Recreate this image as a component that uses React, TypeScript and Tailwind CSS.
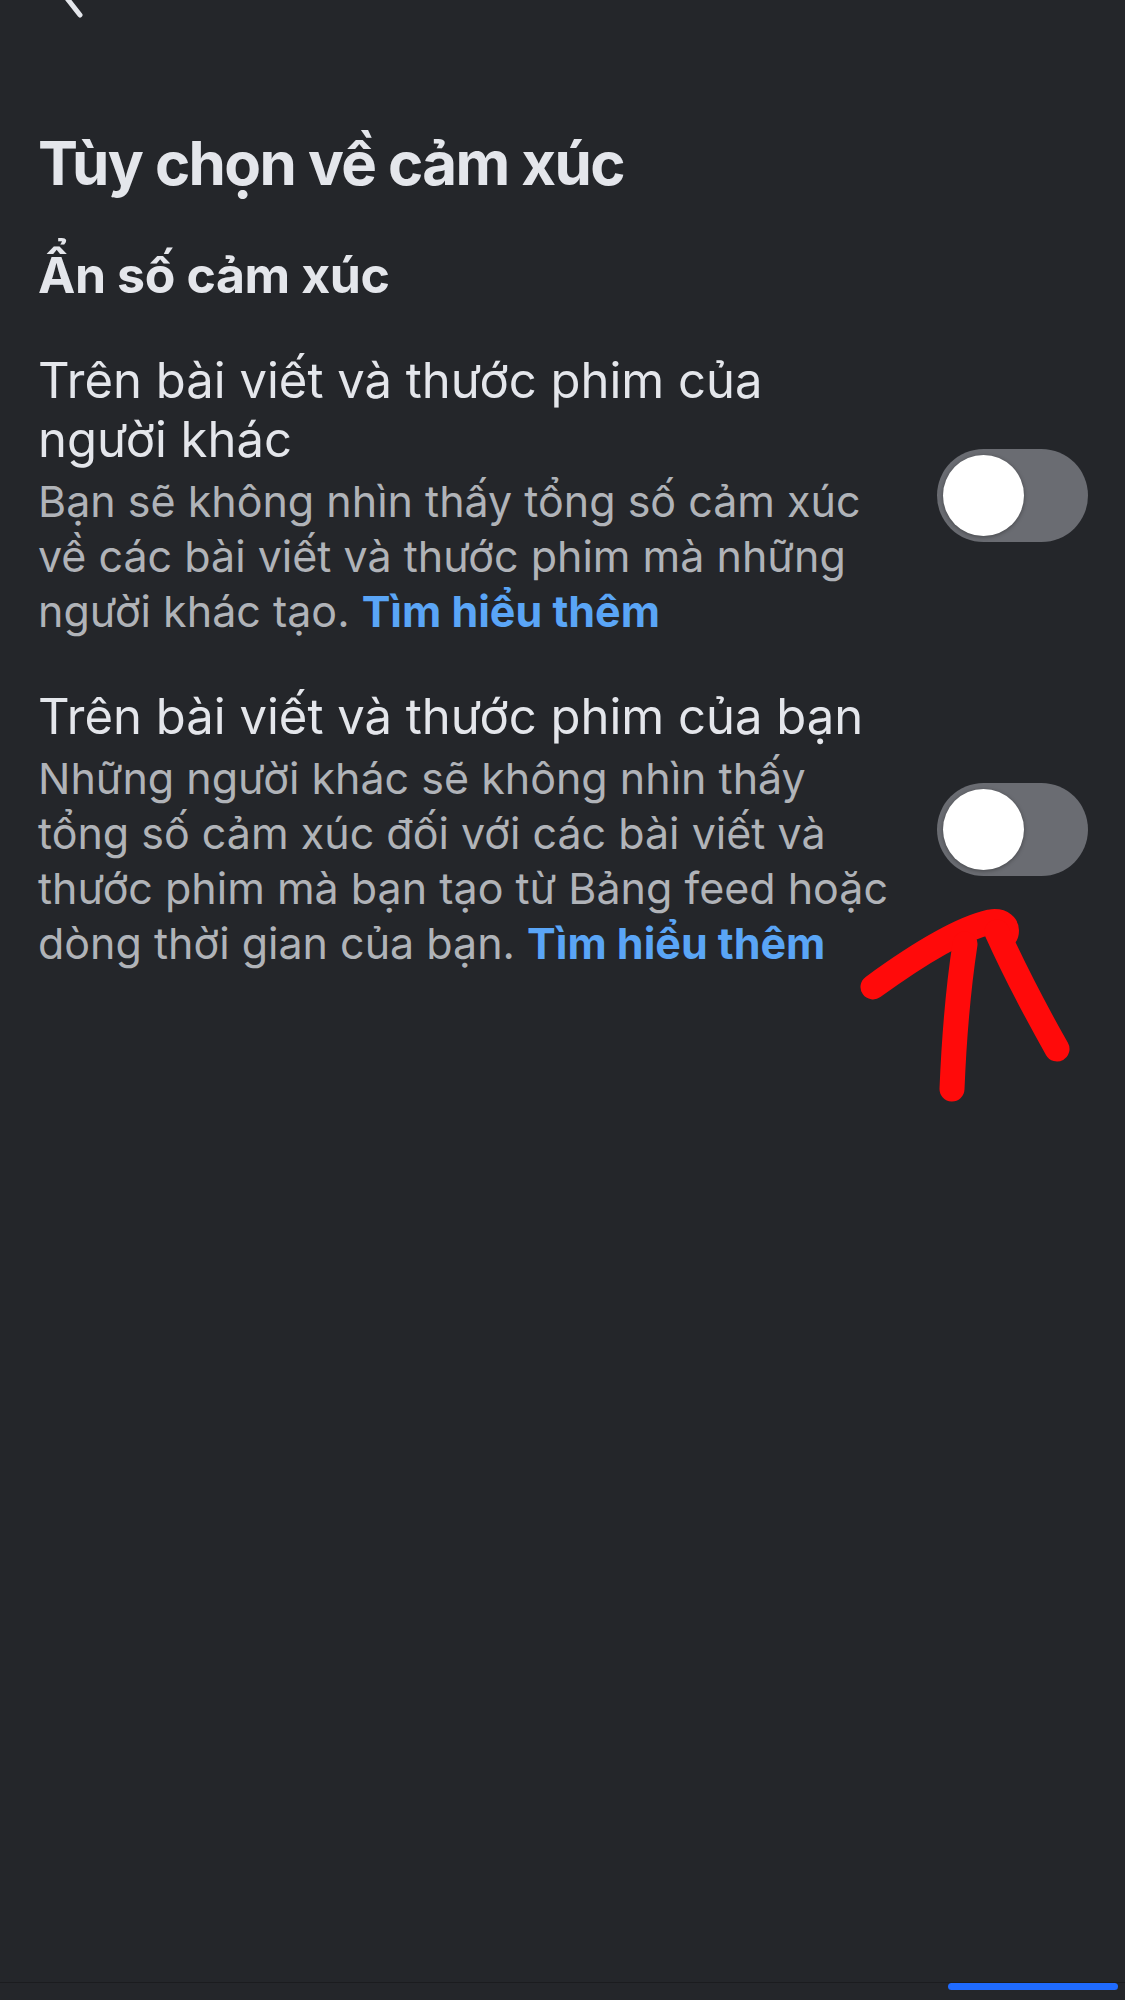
import React from "react";

function Toggle() {
  return (
    <div className="shrink-0 w-[151px] h-[93px] rounded-full bg-[#6a6c72] p-[6px] flex items-center">
      <div className="w-[81px] h-[81px] rounded-full bg-white shadow-[0_1px_4px_rgba(0,0,0,0.35)]" />
    </div>
  );
}

function Row({ title, lines }: { title: string[]; lines: string[] }) {
  return (
    <div className="flex items-center gap-[24px]">
      <div className="flex-1 min-w-0 whitespace-nowrap">
        <p className="text-[49px] leading-[59px] text-[#e4e6eb]">
          {title.map((t, i) => (
            <span key={i} className="block">{t}</span>
          ))}
        </p>
        <p className="mt-[5px] text-[43px] leading-[55px] text-[#b0b3b8]">
          {lines.map((t, i) => (
            <span key={i} className="block">
              {t}
              {i === lines.length - 1 && (
                <>
                  {" "}
                  <span className="font-bold text-[#5aa5f6]">Tìm hiểu thêm</span>
                </>
              )}
            </span>
          ))}
        </p>
      </div>
      <Toggle />
    </div>
  );
}

export default function App() {
  return (
    <div
      className="w-[1125px] h-[2000px] bg-[#24262a] flex flex-col"
      style={{ fontFamily: "Inter, 'Noto Sans', sans-serif" }}
    >
      {/* back chevron, cut off by the top edge */}
      <div className="h-[20px] overflow-hidden">
        <svg width="60" height="60" viewBox="0 0 60 60" className="ml-[30px] -mt-[40px]">
          <path d="M58 4 L32 32 L50 55" fill="none" stroke="#e4e6eb" strokeWidth="5" strokeLinecap="round" strokeLinejoin="round" />
        </svg>
      </div>

      <div className="pl-[38px] pr-[37px] flex-1 flex flex-col">
        <h1 className="mt-[107px] text-[60px] leading-[72px] font-bold text-[#e4e6eb] tracking-[-1.6px]">
          Tùy chọn về cảm xúc
        </h1>
        <h2 className="mt-[48px] text-[50px] leading-[56px] font-bold text-[#e4e6eb] tracking-[-0.4px]">
          Ẩn số cảm xúc
        </h2>

        <div className="mt-[48px] flex flex-col gap-[48px]">
          <Row
            title={["Trên bài viết và thước phim của", "người khác"]}
            lines={[
              "Bạn sẽ không nhìn thấy tổng số cảm xúc",
              "về các bài viết và thước phim mà những",
              "người khác tạo.",
            ]}
          />
          <div className="relative">
            <Row
              title={["Trên bài viết và thước phim của bạn"]}
              lines={[
                "Những người khác sẽ không nhìn thấy",
                "tổng số cảm xúc đối với các bài viết và",
                "thước phim mà bạn tạo từ Bảng feed hoặc",
                "dòng thời gian của bạn.",
              ]}
            />
            {/* red hand-drawn arrow annotation */}
            <svg
              width="240"
              height="220"
              viewBox="0 0 240 220"
              className="absolute left-[802px] top-[213px]"
            >
              <g fill="none" stroke="#ff0a0a" strokeWidth="25" strokeLinecap="round" strokeLinejoin="round">
                <path d="M33 87 C 70 60, 115 30, 150 22 C 162 20, 168 26, 166 34" />
                <path d="M112 189 C 114 140, 118 90, 125 44" />
                <path d="M157 32 C 175 72, 195 110, 217 149" />
              </g>
            </svg>
          </div>
        </div>
      </div>

      <div className="h-[18px] border-t border-[#1b1c1f] flex justify-end pr-[7px]">
        <div className="w-[170px] h-[7px] rounded-full bg-[#1f6bff]" />
      </div>
    </div>
  );
}
